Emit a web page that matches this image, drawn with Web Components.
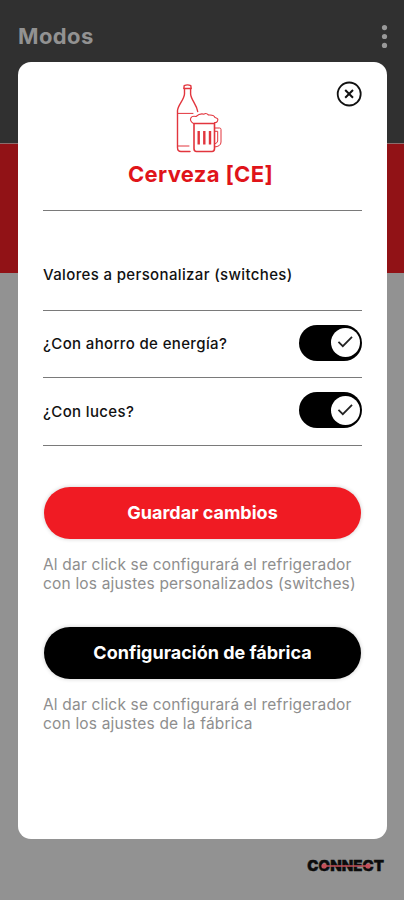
<!DOCTYPE html>
<html lang="es">
<head>
<meta charset="utf-8">
<title>Modos</title>
<style>
    body {
        margin: 0;
        font-family: Inter, 'Liberation Sans', sans-serif;
        background: #929292;
    }
</style>
</head>
<body>
<modes-page heading="Modos">
    <mode-dialog heading="Cerveza [CE]">
        <beer-icon slot="icon"></beer-icon>
        <p slot="intro">Valores a personalizar (switches)</p>
        <switch-row>¿Con ahorro de energía?</switch-row>
        <switch-row>¿Con luces?</switch-row>
        <action-block slot="actions" label="Guardar cambios" style="--action-bg: #f01b23">
            Al dar click se configurará el refrigerador<br>con los ajustes personalizados (switches)
        </action-block>
        <action-block slot="actions" label="Configuración de fábrica">
            Al dar click se configurará el refrigerador<br>con los ajustes de la fábrica
        </action-block>
    </mode-dialog>
    <connect-logo slot="footer"></connect-logo>
</modes-page>

<script>
    function render(el, html) {
        const template = document.createElement('template');
        template.innerHTML = html;
        el.attachShadow({ mode: 'open' }).appendChild(template.content.cloneNode(true));
    }

    class ModesPage extends HTMLElement {
        constructor() {
            super();
            render(this, `
                <style>
                    :host {
                        position: relative;
                        display: flex;
                        flex-direction: column;
                        height: 900px;
                        overflow: hidden;
                        background: #929292;
                    }
                    header {
                        box-sizing: border-box;
                        height: 144px;
                        padding: 22px 16px 0 18px;
                        display: flex;
                        align-items: flex-start;
                        justify-content: space-between;
                        background: #303030;
                        border-bottom: 1px solid #8b6c6c;
                        color: #929292;
                    }
                    h1 {
                        margin: 0;
                        font-size: 22px;
                        line-height: 28px;
                        font-weight: 700;
                        letter-spacing: 0.4px;
                    }
                    header svg { display: block; margin-top: 2px; }
                    .banner { height: 129px; background: #911216; }
                    /* the dialog lies over the whole page */
                    .overlay {
                        position: absolute;
                        inset: 62px 17px 61px 18px;
                        display: grid;
                    }
                    footer {
                        margin-top: auto;
                        padding: 0 20px 25px 0;
                        display: flex;
                        justify-content: flex-end;
                    }
                </style>
                <header>
                    <h1></h1>
                    <svg width="7" height="25" viewBox="0 0 7 25" fill="#999">
                        <circle cx="3.5" cy="3.6" r="2.6"/>
                        <circle cx="3.5" cy="12.5" r="2.6"/>
                        <circle cx="3.5" cy="21.4" r="2.6"/>
                    </svg>
                </header>
                <div class="banner"></div>
                <footer><slot name="footer"></slot></footer>
                <div class="overlay"><slot></slot></div>
            `);
        }

        connectedCallback() {
            this.shadowRoot.querySelector('h1').textContent = this.getAttribute('heading');
        }
    }

    class ModeDialog extends HTMLElement {
        constructor() {
            super();
            render(this, `
                <style>
                    :host {
                        box-sizing: border-box;
                        display: flex;
                        flex-direction: column;
                        padding: 0 25px;
                        border-radius: 13px;
                        background: #fff;
                        color: #111;
                    }
                    .top {
                        box-sizing: border-box;
                        height: 149px;
                        padding-top: 19px;
                        display: grid;
                        grid-template-columns: 26px 1fr 26px;
                        grid-template-rows: 80px 28px;
                        justify-items: center;
                        border-bottom: 1px solid #7a7a7a;
                    }
                    .icon { grid-column: 2; margin-left: -8px; margin-top: 3px; }
                    button {
                        width: 26px;
                        height: 26px;
                        padding: 0;
                        border: 0;
                        background: none;
                    }
                    button svg { display: block; }
                    h2 {
                        grid-column: 1 / -1;
                        margin: 0 4px 0 0;
                        font-size: 22px;
                        line-height: 27px;
                        font-weight: 700;
                        letter-spacing: 0.35px;
                        color: #e0141a;
                    }
                    .intro {
                        box-sizing: border-box;
                        height: 100px;
                        padding-top: 54px;
                        border-bottom: 1px solid #7a7a7a;
                    }
                    ::slotted(p) {
                        margin: 0;
                        font-size: 15px;
                        line-height: 20px;
                        font-weight: 500;
                        letter-spacing: 0.36px;
                    }
                    .actions {
                        display: flex;
                        flex-direction: column;
                        gap: 34px;
                        padding-top: 41px;
                    }
                </style>
                <div class="top">
                    <div class="icon"><slot name="icon"></slot></div>
                    <button aria-label="Cerrar">
                        <svg width="26" height="26" viewBox="0 0 26 26" fill="none" stroke="#111">
                            <circle cx="13.2" cy="13" r="11.5" stroke-width="1.8"/>
                            <path d="M9.2 9l7.8 7.8M17 9l-7.8 7.8" stroke-width="2"/>
                        </svg>
                    </button>
                    <h2></h2>
                </div>
                <div class="intro"><slot name="intro"></slot></div>
                <slot></slot>
                <div class="actions"><slot name="actions"></slot></div>
            `);
        }

        connectedCallback() {
            this.shadowRoot.querySelector('h2').textContent = this.getAttribute('heading');
        }
    }

    class BeerIcon extends HTMLElement {
        constructor() {
            super();
            render(this, `
                <style>
                    :host { display: block; }
                    svg { display: block; }
                </style>
                <svg width="46" height="69" viewBox="0 0 46 69" fill="none" stroke="#e2353d" stroke-width="1.4" stroke-linecap="round" stroke-linejoin="round">
                    <!-- bottle -->
                    <path d="M8.2 1.6Q11.5 .2 14.8 1.6L15.2 4.5H7.8z"/>
                    <path d="M8.5 4.5V10C8 16 2.2 20.5 1.5 26.5V63.5Q1.5 67.5 5 67.5H14"/>
                    <path d="M14.6 4.5V10C15 16 20.5 20 21.7 27.5"/>
                    <path d="M2 29.4H17M2 62H13" stroke-width="1"/>
                    <!-- mug -->
                    <path d="M18 39.5V64.5Q18 67.5 20.5 67.5H36Q38.5 67.5 38.5 64.5V39.5z" stroke-width="1.6"/>
                    <path d="M38.5 44H43.5Q45 44 45 45.5V58Q45 62.5 38.5 63M38.5 47.3H41.7V57Q41.7 59 38.5 60" stroke-width="1"/>
                    <path d="M22.7 47V60.5M28.3 47V60.5M34 47V60.5" stroke-width="2.4" stroke-linecap="butt"/>
                    <!-- foam -->
                    <path d="M17.5 39.5Q13.5 37 14.8 34Q16 31.6 20 32.5Q24 29 28 30.2Q30 28.4 32.5 31Q38 30.5 39 33.5Q43 34.5 41.5 37Q40.8 39 38.5 38.6" stroke-width="1.1"/>
                </svg>
            `);
        }
    }

    class SwitchRow extends HTMLElement {
        constructor() {
            super();
            render(this, `
                <style>
                    :host {
                        box-sizing: border-box;
                        height: 67px;
                        padding-bottom: 1px;
                        display: flex;
                        align-items: center;
                        justify-content: space-between;
                        border-bottom: 1px solid #7a7a7a;
                        font-size: 15px;
                        font-weight: 500;
                        letter-spacing: 0.36px;
                    }
                    :host(:nth-of-type(2)) { height: 68px; }
                    .track {
                        box-sizing: border-box;
                        width: 63px;
                        height: 36px;
                        padding: 0 2px;
                        margin-bottom: 2px;
                        display: flex;
                        align-items: center;
                        justify-content: flex-end;
                        border-radius: 18px;
                        background: #000;
                    }
                    svg { display: block; }
                </style>
                <span><slot></slot></span>
                <div class="track" role="switch" aria-checked="true">
                    <svg width="29" height="29" viewBox="0 0 28 28">
                        <circle cx="14" cy="14" r="14" fill="#fff"/>
                        <path d="M7.2 13.4l4.2 4.2L20.3 8.6" fill="none" stroke="#222" stroke-width="1.7"/>
                    </svg>
                </div>
            `);
        }
    }

    class ActionBlock extends HTMLElement {
        constructor() {
            super();
            render(this, `
                <style>
                    :host { display: flex; flex-direction: column; gap: 16px; }
                    button {
                        height: 52px;
                        margin: 0 1px;
                        padding: 0;
                        border: 0;
                        border-radius: 26px;
                        background: var(--action-bg, #000);
                        box-shadow: 0 0 4px rgba(0, 0, 0, 0.2);
                        color: #fff;
                        font: 700 18px/52px Inter, 'Liberation Sans', sans-serif;
                    }
                    p {
                        margin: 0;
                        font-size: 15.5px;
                        line-height: 19px;
                        letter-spacing: 0.18px;
                        color: #8e8e8e;
                        white-space: nowrap;
                    }
                </style>
                <button></button>
                <p><slot></slot></p>
            `);
        }

        connectedCallback() {
            this.shadowRoot.querySelector('button').textContent = this.getAttribute('label');
        }
    }

    class ConnectLogo extends HTMLElement {
        constructor() {
            super();
            render(this, `
                <style>
                    :host {
                        position: relative;
                        display: block;
                        font-size: 15px;
                        line-height: 18px;
                        font-weight: 900;
                        color: #0c0c0c;
                        -webkit-text-stroke: 0.4px #0c0c0c;
                    }
                    svg { position: absolute; left: 14px; top: 6px; }
                </style>
                CONNECT
                <svg width="50" height="6" viewBox="0 0 50 6" fill="#c4505a">
                    <circle cx="3" cy="3" r="2.6"/>
                    <path d="M3 2.3H47V3.7H3z"/>
                    <circle cx="47" cy="3" r="2.6"/>
                </svg>
            `);
        }
    }

    customElements.define('beer-icon', BeerIcon);
    customElements.define('switch-row', SwitchRow);
    customElements.define('action-block', ActionBlock);
    customElements.define('connect-logo', ConnectLogo);
    customElements.define('mode-dialog', ModeDialog);
    customElements.define('modes-page', ModesPage);
</script>
</body>
</html>
